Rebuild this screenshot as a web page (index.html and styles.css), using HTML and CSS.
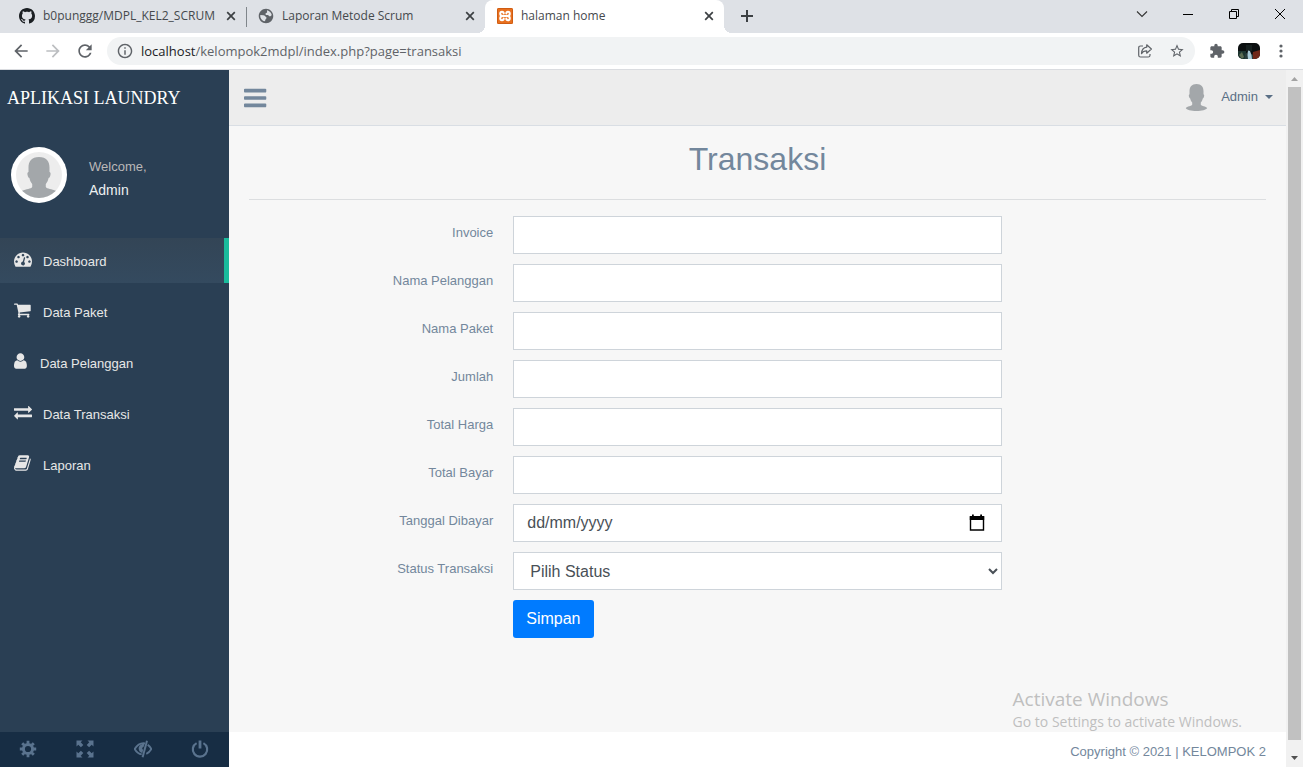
FILE: index.html
```html
<!DOCTYPE html>
<html lang="id">
<head>
<meta charset="utf-8">
<title>halaman home</title>
<meta name="viewport" content="width=device-width, initial-scale=1">
<link rel="stylesheet" href="styles.css">
</head>
<body>
<svg class="sprite" aria-hidden="true">
  <symbol id="close" viewBox="0 0 10 10"><path d="M1.2 1.2l7.6 7.6M8.8 1.2L1.2 8.8" fill="none" stroke="#3c4043" stroke-width="1.7"/></symbol>
  <symbol id="person" viewBox="0 0 24 27"><path d="M11.500 0c4.800 0 7 3 7 7.200v3c.9.3.8 1.600.4 2.700-.3.900-.6 1.400-1.100 1.600-.4 1.900-1.200 3.200-2 4.100v2.100c.6 1.300 5.200 1.500 6.400 3.300C21 25.800 17 27 11.500 27S1.500 25.800.8 24c1.200-1.800 5.800-2 6.400-3.300v-2.100c-.8-.9-1.600-2.200-2-4.100-.5-.2-.8-.7-1.100-1.600-.4-1.100-.5-2.400.4-2.700v-3C4.500 3 6.800 0 11.500 0z" fill="#a3a7aa"/></symbol>
</svg>

<header class="browser">
  <div class="tabstrip">
    <div class="tab">
      <svg class="favicon" viewBox="0 0 16 16"><path fill="#1b1f23" d="M8 0C3.580 0 0 3.580 0 8c0 3.540 2.290 6.530 5.470 7.590.4.07.55-.17.55-.38 0-.19-.01-.82-.01-1.490-2.010.37-2.530-.49-2.690-.94-.09-.23-.48-.94-.82-1.130-.28-.15-.68-.52-.01-.53.63-.01 1.080.58 1.230.82.72 1.210 1.870.87 2.330.66.07-.52.28-.87.51-1.070-1.780-.2-3.640-.89-3.640-3.950 0-.87.31-1.590.82-2.150-.08-.2-.36-1.020.08-2.120 0 0 .67-.21 2.200.82.64-.18 1.320-.27 2-.27s1.360.09 2 .27c1.530-1.040 2.200-.82 2.200-.82.44 1.100.16 1.920.08 2.120.51.56.82 1.270.82 2.150 0 3.070-1.870 3.750-3.650 3.950.29.25.54.73.54 1.480 0 1.070-.01 1.930-.01 2.200 0 .21.15.46.55.38A8.010 8.010 0 0016 8c0-4.420-3.580-8-8-8z"/></svg>
      <span class="tab-title">b0punggg/MDPL_KEL2_SCRUM</span>
      <button class="tab-close" aria-label="Close tab"><svg><use href="#close"/></svg></button>
    </div>
    <div class="tab tab-divided">
      <svg class="favicon" viewBox="1 1 22 22"><path fill="#5f6368" d="M12 2C6.480 2 2 6.480 2 12s4.480 10 10 10 10-4.480 10-10S17.520 2 12 2zM4.200 10.500l4.300.3c1.500.1 2.500.8 2.700 2 .1.800 1.400.7 1.500 1.700.1 1.200-.9 1.400-1.400 2.400-.3.800-.3 2.200-1.300 2.200-3.500-1-6.500-4.500-5.800-8.600zm9.500-6.300c3 .7 5.500 3.300 6.200 6.300-1 .9-1.200 2-2.600 2-1.700 0-1.300-1.600-2.800-1.800-1.500-.2-3.200.1-3.200-1.500 0-1.500 1.900-1.200 2.200-2.300.3-1-.7-1.600.2-2.700z"/></svg>
      <span class="tab-title">Laporan Metode Scrum</span>
      <button class="tab-close" aria-label="Close tab"><svg><use href="#close"/></svg></button>
    </div>
    <div class="tab tab-active">
      <svg class="favicon" viewBox="0 0 16 16"><rect width="16" height="16" rx="1.500" fill="#e8701f"/><rect x=".5" y=".5" width="15" height="15" rx="1" fill="none" stroke="#cf5c12"/><path d="M6.300 8H9.700M6.300 8C4 8 3.200 7 3.200 5.700S4 3.700 5 3.700 6.700 4.500 6.700 5.500M6.300 8C4 8 3.200 9 3.200 10.300S4 12.300 5 12.300 6.700 11.500 6.700 10.500M9.700 8c2.300 0 3.100-1 3.100-2.300S12 3.700 11 3.700 9.300 4.500 9.300 5.500M9.700 8c2.300 0 3.100 1 3.100 2.300S12 12.300 11 12.300 9.300 11.500 9.300 10.500" fill="none" stroke="#fff" stroke-width="2" stroke-linecap="round"/></svg>
      <span class="tab-title">halaman home</span>
      <button class="tab-close" aria-label="Close tab"><svg><use href="#close"/></svg></button>
    </div>
    <button class="new-tab" aria-label="New tab"><svg width="12" height="12" viewBox="0 0 12 12"><path d="M6 0v12M0 6h12" stroke="#3c4043" stroke-width="2"/></svg></button>
    <div class="window-controls">
      <button aria-label="Search tabs"><svg width="12" height="12" viewBox="0 0 12 12"><path d="M1 3.500l5 5 5-5" fill="none" stroke="#333" stroke-width="1.100"/></svg></button>
      <button aria-label="Minimize"><svg width="10" height="10" viewBox="0 0 10 10"><path d="M0 5.500h10" stroke="#000"/></svg></button>
      <button aria-label="Restore"><svg width="10" height="10" viewBox="0 0 10 10"><path d="M.5 2.500h7v7h-7zM2.500 2.500v-2h7v7h-2" fill="none" stroke="#000"/></svg></button>
      <button aria-label="Close"><svg width="10" height="10" viewBox="0 0 10 10"><path d="M0 0l10 10M10 0L0 10" stroke="#000"/></svg></button>
    </div>
  </div>
  <div class="toolbar">
    <div class="nav-buttons">
      <button aria-label="Back"><svg width="20" height="20" viewBox="0 0 24 24"><path fill="#5f6368" d="M20 11H7.830l5.590-5.590L12 4l-8 8 8 8 1.410-1.410L7.830 13H20v-2z"/></svg></button>
      <button aria-label="Forward"><svg width="20" height="20" viewBox="0 0 24 24"><path fill="#bcbec1" d="M4 11h12.170l-5.590-5.590L12 4l8 8-8 8-1.410-1.410L16.170 13H4v-2z"/></svg></button>
      <button aria-label="Reload"><svg width="20" height="20" viewBox="0 0 24 24"><path fill="#5f6368" d="M17.650 6.350C16.200 4.900 14.210 4 12 4c-4.420 0-7.990 3.580-7.990 8s3.570 8 7.990 8c3.730 0 6.840-2.550 7.730-6h-2.080c-.82 2.330-3.040 4-5.650 4-3.310 0-6-2.690-6-6s2.690-6 6-6c1.660 0 3.140.69 4.220 1.780L13 11h7V4l-2.350 2.350z"/></svg></button>
    </div>
    <div class="omnibox">
      <svg width="16" height="16" viewBox="1 1 22 22"><path fill="#5f6368" d="M11 7h2v2h-2zm0 4h2v6h-2zm1-9C6.480 2 2 6.480 2 12s4.480 10 10 10 10-4.480 10-10S17.520 2 12 2zm0 18c-4.410 0-8-3.590-8-8s3.590-8 8-8 8 3.590 8 8-3.590 8-8 8z"/></svg>
      <span class="url"><span class="url-host">localhost</span>/kelompok2mdpl/index.php?page=transaksi</span>
      <button aria-label="Share"><svg width="16" height="16" viewBox="0 0 16 16"><path d="M6 3H3.500Q1.700 3 1.700 4.800v7.400Q1.700 14 3.500 14h7.700Q13 14 13 12.200V11M9.700 1.800L14.400 6 9.700 10.200V7.800C7.300 7.800 5.600 8.600 4.500 10.600 4.700 7.200 6.500 4.600 9.700 4.200z" fill="none" stroke="#5f6368" stroke-width="1.200" stroke-linejoin="round"/></svg></button>
      <button aria-label="Bookmark"><svg width="16" height="16" viewBox="0 0 24 24"><path fill="#5f6368" d="M22 9.240l-7.190-.62L12 2 9.190 8.630 2 9.240l5.460 4.730L5.820 21 12 17.270 18.180 21l-1.630-7.030L22 9.240zM12 15.400l-3.760 2.270 1-4.280-3.320-2.880 4.380-.38L12 6.100l1.710 4.040 4.380.38-3.320 2.880 1 4.280L12 15.400z"/></svg></button>
    </div>
    <div class="nav-buttons">
      <button aria-label="Extensions"><svg width="16" height="16" viewBox="0 0 24 24"><path fill="#5f6368" d="M20.500 11H19V7c0-1.100-.9-2-2-2h-4V3.500C13 2.120 11.880 1 10.500 1S8 2.120 8 3.500V5H4c-1.100 0-1.990.9-1.990 2v3.800H3.500c1.490 0 2.700 1.210 2.700 2.700s-1.210 2.700-2.700 2.700H2V20c0 1.100.9 2 2 2h3.800v-1.500c0-1.490 1.210-2.700 2.700-2.700 1.490 0 2.700 1.210 2.700 2.700V22H17c1.100 0 2-.9 2-2v-4h1.500c1.380 0 2.500-1.120 2.500-2.500S21.880 11 20.500 11z"/></svg></button>
      <button aria-label="Profile"><svg width="22" height="16" viewBox="0 0 22 16"><defs><clipPath id="pill"><rect width="22" height="16" rx="5"/></clipPath></defs><g clip-path="url(#pill)"><path fill="#0b0f10" d="M0 0h22v16H0z"/><path fill="#1d3430" d="M0 8h8v8H0z"/><path fill="#16201f" d="M8 2h6v6H8z"/><path fill="#702718" d="M15 9l7-2v9h-8z"/><path fill="#2a3c3c" d="M7 11l3-2 5 3v4H7z"/><path fill="#a9c9d6" d="M10 7.500l2 .5 1.500 4 .5 4h-4l-.5-4z"/><path fill="#5b6b52" d="M1 12l3-3 2 5-2 2z"/></g></svg></button>
      <button aria-label="Menu"><svg width="4" height="16" viewBox="0 0 4 16"><g fill="#5f6368"><circle cx="2" cy="3" r="1.600"/><circle cx="2" cy="8" r="1.600"/><circle cx="2" cy="13" r="1.600"/></g></svg></button>
    </div>
  </div>
</header>

<div class="app">
  <aside class="sidebar">
    <a class="brand" href="#">APLIKASI LAUNDRY</a>
    <div class="profile">
      <svg class="profile-pic" viewBox="0 0 56 56" role="img" aria-label="Admin"><defs><clipPath id="face"><circle cx="28" cy="28" r="23"/></clipPath></defs><circle cx="28" cy="28" r="28" fill="#fff"/><circle cx="28" cy="28" r="23" fill="#ededed"/><g clip-path="url(#face)"><path fill="#a3a7aa" d="M28 10c7.500 0 10.500 4.500 10.500 10.500V25c1.500.3 1.200 2.500.7 4-.4 1.300-.9 1.900-1.600 2-.5 2.500-1.600 4.500-2.800 6v3c1.200 2 6 2 10.200 3.800V56H11V43.800C15.200 42 20 42 21.200 40v-3c-1.200-1.500-2.300-3.500-2.800-6-.7-.1-1.200-.7-1.600-2-.5-1.500-.8-3.700.7-4v-4.500C17.500 14.500 20.500 10 28 10z"/></g></svg>
      <div class="profile-info"><span>Welcome,</span><strong>Admin</strong></div>
    </div>
    <nav class="menu">
      <a class="menu-active" href="#"><svg viewBox="0 0 1792 1792"><path d="M384 1152q0-53-37.500-90.500t-90.500-37.500-90.500 37.500-37.500 90.500 37.500 90.500 90.500 37.500 90.500-37.500 37.500-90.500zm192-448q0-53-37.500-90.500t-90.500-37.500-90.500 37.500-37.500 90.500 37.500 90.500 90.500 37.500 90.500-37.500 37.500-90.500zm428 481l101-382q6-26-7.500-48.500t-38.500-29.500-48 6.500-30 39.500l-101 382q-60 5-107 43.500t-63 98.500q-20 77 20 146t117 89 146-20 89-117q16-60-6-117t-72-91zm660-33q0-53-37.500-90.500t-90.500-37.500-90.500 37.500-37.500 90.500 37.500 90.500 90.500 37.500 90.500-37.500 37.500-90.500zm-640-640q0-53-37.500-90.500t-90.500-37.500-90.500 37.500-37.500 90.500 37.500 90.500 90.500 37.500 90.500-37.500 37.500-90.500zm448 192q0-53-37.500-90.500t-90.500-37.500-90.500 37.500-37.500 90.500 37.500 90.500 90.500 37.500 90.500-37.500 37.500-90.500zm320 448q0 261-141 483-19 29-54 29h-1402q-35 0-54-29-141-221-141-483 0-182 71-348t191-286 286-191 348-71 348 71 286 191 191 286 71 348z"/></svg>Dashboard</a>
      <a href="#"><svg viewBox="64 0 1792 1792"><path d="M704 1536q0 52-38 90t-90 38-90-38-38-90 38-90 90-38 90 38 38 90zm896 0q0 52-38 90t-90 38-90-38-38-90 38-90 90-38 90 38 38 90zm128-1088v512q0 24-16.500 42.500t-40.500 21.500l-1044 122q13 60 13 70 0 16-24 64h920q26 0 45 19t19 45-19 45-45 19h-1024q-26 0-45-19t-19-45q0-11 8-31.500t16-36 21.500-40 15.500-29.500l-177-823h-204q-26 0-45-19t-19-45 19-45 45-19h256q16 0 28.500 6.500t19.500 15.500 13 24.500 8 26 5.500 29.500 4.500 26h1201q26 0 45 19t19 45z"/></svg>Data Paket</a>
      <a class="menu-tight" href="#"><svg viewBox="256 0 1792 1792"><path d="M1536 1399q0 109-62.500 187t-150.500 78h-854q-88 0-150.500-78t-62.500-187q0-85 8.500-160.500t31.500-152 58.500-131 94-89 134.500-34.500q131 128 313 128t313-128q76 0 134.500 34.500t94 89 58.500 131 31.500 152 8.500 160.500zm-256-887q0 159-112.500 271.500t-271.500 112.500-271.500-112.500-112.500-271.500 112.500-271.500 271.500-112.500 271.500 112.500 112.500 271.500z"/></svg>Data Pelanggan</a>
      <a href="#"><svg viewBox="0 0 1792 1792"><path d="M1792 1184v192q0 13-9.500 22.500t-22.500 9.500h-1376v192q0 13-9.500 22.500t-22.500 9.500q-12 0-24-10l-319-320q-9-9-9-22 0-14 9-23l320-320q9-9 23-9 13 0 22.500 9.500t9.500 22.500v192h1376q13 0 22.500 9.500t9.500 22.500zm0-544q0 14-9 23l-320 320q-9 9-23 9-13 0-22.500-9.500t-9.500-22.500v-192h-1376q-13 0-22.500-9.500t-9.500-22.500v-192q0-13 9.500-22.500t22.500-9.500h1376v-192q0-14 9-23t23-9q12 0 24 10l319 319q9 9 9 23z"/></svg>Data Transaksi</a>
      <a href="#"><svg viewBox="64 0 1792 1792"><path d="M1703 478q40 57 18 129l-275 906q-19 64-76.500 107.500t-122.500 43.500h-923q-77 0-148.500-53.500t-99.500-131.500q-24-67-2-127 0-4 3-27t4-37q1-8-3-21.500t-3-19.500q2-11 8-21t16.500-23.500 16.500-23.500q23-38 45-91.500t30-91.500q3-10 .5-30t-.5-28q3-11 17-28t17-23q21-36 42-92t25-90q1-9-2.500-32t.5-28q4-13 22-30.500t22-22.500q19-26 42.500-84.500t27.500-96.500q1-8-3-25.500t-2-26.500q2-8 9-18t18-23 17-21q8-12 16.500-30.500t15-35 16-36 19.500-32 26.500-23.500 36-11.500 47.500 5.500l-1 3q38-9 51-9h761q74 0 114 56t18 130l-274 906q-36 119-71.500 153.500t-128.500 34.500h-869q-27 0-38 15-11 16-1 43 24 70 144 70h923q29 0 56-15.500t35-41.500l300-987q7-22 5-57 38 15 59 43zm-1064 2q-4 13 2 22.500t20 9.500h608q13 0 25.500-9.500t16.500-22.500l21-64q4-13-2-22.500t-20-9.500h-608q-13 0-25.500 9.500t-16.500 22.500zm-83 256q-4 13 2 22.500t20 9.500h608q13 0 25.500-9.500t16.500-22.500l21-64q4-13-2-22.500t-20-9.500h-608q-13 0-25.500 9.500t-16.500 22.500z"/></svg>Laporan</a>
    </nav>
    <div class="sidebar-footer">
      <a href="#" aria-label="Settings"><svg viewBox="0 0 18 18"><circle cx="9" cy="9" r="4.600" fill="none" stroke="currentColor" stroke-width="3"/><path d="M9 .8v3M9 14.200v3M.8 9h3M14.200 9h3M3.200 3.200l2.100 2.100M12.700 12.700l2.100 2.100M3.200 14.800l2.100-2.100M12.700 5.300l2.100-2.100" stroke="currentColor" stroke-width="2.800"/></svg></a>
      <a href="#" aria-label="FullScreen"><svg viewBox="0 0 18 18"><path fill="currentColor" d="M.5.500h6L4.700 2.300l2.600 2.600-2.400 2.400-2.600-2.600L.5 6.500zM17.500.500v6l-1.800-1.800-2.600 2.600-2.400-2.400 2.600-2.600L11.500.500zM.5 17.500v-6l1.800 1.800 2.600-2.600 2.400 2.400-2.600 2.600 1.800 1.800zM17.500 17.500h-6l1.800-1.800-2.600-2.600 2.400-2.400 2.600 2.600 1.800-1.800z"/></svg></a>
      <a href="#" aria-label="Lock"><svg viewBox="0 0 18 18"><path d="M11 3.400C6.500 2.700 3 5.200.7 9c1.700 2.900 4 4.900 7 5.400M13.700 4.800C15.300 5.900 16.500 7.400 17.400 9c-1.200 2.100-3 4-5.100 4.900" fill="none" stroke="currentColor" stroke-width="1.900"/><path d="M13 .8L8.600 17.200" stroke="currentColor" stroke-width="2"/><path d="M10.500 4C6.500 3.500 4.300 6.500 4.700 9c.3 2.200 1.500 3.600 3.600 4l.9-3.200C7.900 9.200 7.700 7.500 9.500 7z" fill="currentColor"/></svg></a>
      <a href="#" aria-label="Logout"><svg viewBox="0 0 18 18"><path d="M5.600 3.100a7.200 7.200 0 1 0 6.800 0" fill="none" stroke="currentColor" stroke-width="2.200"/><path d="M9 .5v8" stroke="currentColor" stroke-width="2.800"/></svg></a>
    </div>
  </aside>

  <div class="page">
    <div class="topnav">
      <button class="menu-toggle" aria-label="Toggle menu"><svg width="26" height="26" viewBox="128 0 1792 1792"><path fill="currentColor" d="M1664 1344v128q0 26-19 45t-45 19h-1408q-26 0-45-19t-19-45v-128q0-26 19-45t45-19h1408q26 0 45 19t19 45zm0-512v128q0 26-19 45t-45 19h-1408q-26 0-45-19t-19-45v-128q0-26 19-45t45-19h1408q26 0 45 19t19 45zm0-512v128q0 26-19 45t-45 19h-1408q-26 0-45-19t-19-45v-128q0-26 19-45t45-19h1408q26 0 45 19t19 45z"/></svg></button>
      <a class="user-menu" href="#"><svg class="user-pic"><use href="#person"/></svg><span class="user-name">Admin<i class="caret"></i></span></a>
    </div>
    <main class="content">
      <h1>Transaksi</h1>
      <hr>
      <form>
        <div class="row"><label for="invoice">Invoice</label><input class="field" id="invoice" type="text"></div>
        <div class="row"><label for="pelanggan">Nama Pelanggan</label><input class="field" id="pelanggan" type="text"></div>
        <div class="row"><label for="paket">Nama Paket</label><input class="field" id="paket" type="text"></div>
        <div class="row"><label for="jumlah">Jumlah</label><input class="field" id="jumlah" type="text"></div>
        <div class="row"><label for="harga">Total Harga</label><input class="field" id="harga" type="text"></div>
        <div class="row"><label for="bayar">Total Bayar</label><input class="field" id="bayar" type="text"></div>
        <div class="row"><label for="tanggal">Tanggal Dibayar</label>
          <div class="field date"><input id="tanggal" type="text" placeholder="dd/mm/yyyy"><button type="button" aria-label="Pilih tanggal"><svg width="16" height="18" viewBox="0 0 16 18"><path d="M1.500 3v13h13V3z" fill="none" stroke="#000" stroke-width="1.400"/><path d="M.8 2h14.400v4H.8zM3 .500h1.800v2H3zM11.200.500H13v2h-1.800z"/></svg></button></div>
        </div>
        <div class="row"><label for="status">Status Transaksi</label><select class="field" id="status"><option>Pilih Status</option></select></div>
        <div class="row"><button class="submit" type="submit">Simpan</button></div>
      </form>
      <div class="watermark"><p class="watermark-title">Activate Windows</p><p>Go to Settings to activate Windows.</p></div>
    </main>
    <footer class="footer">Copyright © 2021 | KELOMPOK 2</footer>
  </div>

  <div class="scrollbar" aria-hidden="true">
    <svg width="17" height="17" viewBox="0 0 17 17"><path d="M5 11h7L8.500 7z" fill="#a3a3a3"/></svg>
    <div class="thumb"></div>
    <svg width="17" height="27" viewBox="0 0 17 27"><path d="M5 16h7l-3.500 4z" fill="#505050"/></svg>
  </div>
</div>
</body>
</html>
```
FILE: styles.css
```css
*, *::before, *::after { box-sizing: border-box; }
body {
  margin: 0;
  min-height: 100vh;
  display: flex;
  flex-direction: column;
  font: 13px/20px "Liberation Sans", Arial, sans-serif;
  color: #73879c;
  background: #f7f7f7;
}
button { border: 0; padding: 0; background: none; color: inherit; font: inherit; }
a { color: inherit; text-decoration: none; }
svg { flex: none; display: block; }
.sprite { position: absolute; width: 0; height: 0; }

/* Browser window */
.browser { font-family: "Open Sans", "Noto Sans", sans-serif; border-bottom: 1px solid #dadce0; background: #fff; }
.tabstrip { display: flex; height: 33px; padding-left: 7px; background: #dee1e6; }
.tab { flex: 0 1 239px; display: flex; align-items: center; gap: 8px; padding: 0 10px 1px 12px; font-size: 12px; color: #45494d; }
.tab-divided { background: linear-gradient(#80868b, #80868b) left center / 1px 20px no-repeat; }
.tab-active { position: relative; background: #fff; border-radius: 8px 8px 0 0; }
.tab-active::before, .tab-active::after {
  content: "";
  position: absolute;
  bottom: 0;
  width: 8px;
  height: 8px;
}
.tab-active::before { right: 100%; background: radial-gradient(circle at 0 0, transparent 8px, #fff 8px); }
.tab-active::after { left: 100%; background: radial-gradient(circle at 100% 0, transparent 8px, #fff 8px); }
.favicon { width: 16px; height: 16px; }
.tab-title { flex: 1; white-space: nowrap; overflow: hidden; }
.tab-close svg { width: 10px; height: 10px; }
.new-tab { width: 46px; padding-bottom: 1px; display: grid; place-items: center; }
.window-controls { display: flex; margin-left: auto; }
.window-controls button { width: 46px; height: 27px; display: grid; place-items: center; }
.toolbar { display: flex; align-items: center; gap: 6px; height: 36px; padding: 0 6px 0 5px; }
.nav-buttons { display: flex; }
.nav-buttons button { width: 32px; height: 28px; display: grid; place-items: center; }
.omnibox { flex: 1; display: flex; align-items: center; height: 28px; padding: 0 2px 0 10px; border-radius: 14px; background: #f1f3f4; }
.omnibox button { width: 32px; height: 28px; display: grid; place-items: center; }
.url { flex: 1; padding-left: 8px; font-size: 13px; color: #5f6368; }
.url-host { color: #202124; }

/* Application shell */
.app { flex: 1; display: flex; }
.sidebar { flex: 0 0 229px; display: flex; flex-direction: column; background: #2a3f54; }
.brand { padding: 0 7px; font: 18px/57px "Liberation Serif", "Times New Roman", serif; color: #fff; }
.profile { display: flex; gap: 22px; padding: 20px 11px 35px; }
.profile-pic { width: 56px; height: 56px; }
.profile-info { display: flex; flex-direction: column; gap: 3px; padding-top: 10px; color: #bab8b8; }
.profile-info strong { font-size: 14px; font-weight: 400; color: #ecf0f1; }
.menu { display: flex; flex-direction: column; gap: 6px; }
.menu a { display: flex; align-items: center; gap: 11px; height: 45px; padding: 2px 14px 0; color: #e7e7e7; border-right: 5px solid transparent; }
.menu .menu-active { border-color: #1abb9c; background: linear-gradient(#334556, #344a5f); }
.menu .menu-tight { gap: 8px; }
.menu svg { width: 18px; height: 18px; margin-bottom: 5px; fill: #e7e7e7; }
.sidebar-footer { display: grid; grid-template-columns: repeat(4, 1fr); height: 35px; margin-top: auto; background: #172d44; color: #5a738e; }
.sidebar-footer a { display: grid; place-items: center; padding: 0 1px 1px 0; }
.sidebar-footer svg { width: 18px; height: 18px; }

.page { flex: 1; display: flex; flex-direction: column; min-width: 0; }
.topnav { display: flex; align-items: center; justify-content: space-between; height: 56px; padding: 0 13px 0 15px; background: #ededed; border-bottom: 1px solid #d9dee4; }
.menu-toggle { color: #73879c; }
.user-menu { display: flex; align-items: center; color: #5a6f85; }
.user-pic { width: 24px; height: 27px; margin-right: 12px; }
.user-name { display: flex; align-items: center; padding-bottom: 2px; }
.caret { width: 0; margin-left: 7px; border: 4px solid transparent; border-top-color: currentColor; border-bottom: 0; }
.content { position: relative; flex: 1; padding: 14px 20px 0; }
h1 { margin: 0; font-size: 32px; line-height: 38px; font-weight: 400; text-align: center; }
hr { margin: 21px 0 16px; border: 0; border-top: 1px solid #dcdee0; }
form { display: flex; flex-direction: column; gap: 10px; }
.row { display: grid; grid-template-columns: 1fr 2fr 1fr; min-height: 38px; }
.row label { padding: 7px 10px 0; text-align: right; }
.field { width: auto; min-width: 0; height: 38px; margin: 0 10px; padding: 6px 12px; border: 1px solid #ced4da; border-radius: 0; background: #fff; font: 16px/24px "Liberation Sans", Arial, sans-serif; color: #495057; }
.date { display: flex; align-items: center; padding: 0 16px 0 13px; }
.date input { flex: 1; min-width: 0; padding: 0; border: 0; background: none; font: inherit; color: inherit; }
.date input::placeholder { color: inherit; opacity: 1; }
.submit { grid-column: 2; justify-self: start; height: 38px; margin-left: 10px; padding: 0 13px; border-radius: 3px; background: #007bff; color: #fff; font-size: 16px; }
.watermark { position: absolute; right: 44px; bottom: 0; font: 14px/20px "Open Sans", "Noto Sans", sans-serif; color: #bfbfbf; white-space: nowrap; }
.watermark p { margin: 0; }
.watermark .watermark-title { font-size: 19px; line-height: 26px; }
.footer { height: 35px; padding: 0 20px; line-height: 40px; text-align: right; background: #fff; }

.scrollbar { flex: 0 0 17px; display: flex; flex-direction: column; background: #f1f1f1; }
.thumb { flex: 1; margin: 0 2px; background: #c1c1c1; }
```
